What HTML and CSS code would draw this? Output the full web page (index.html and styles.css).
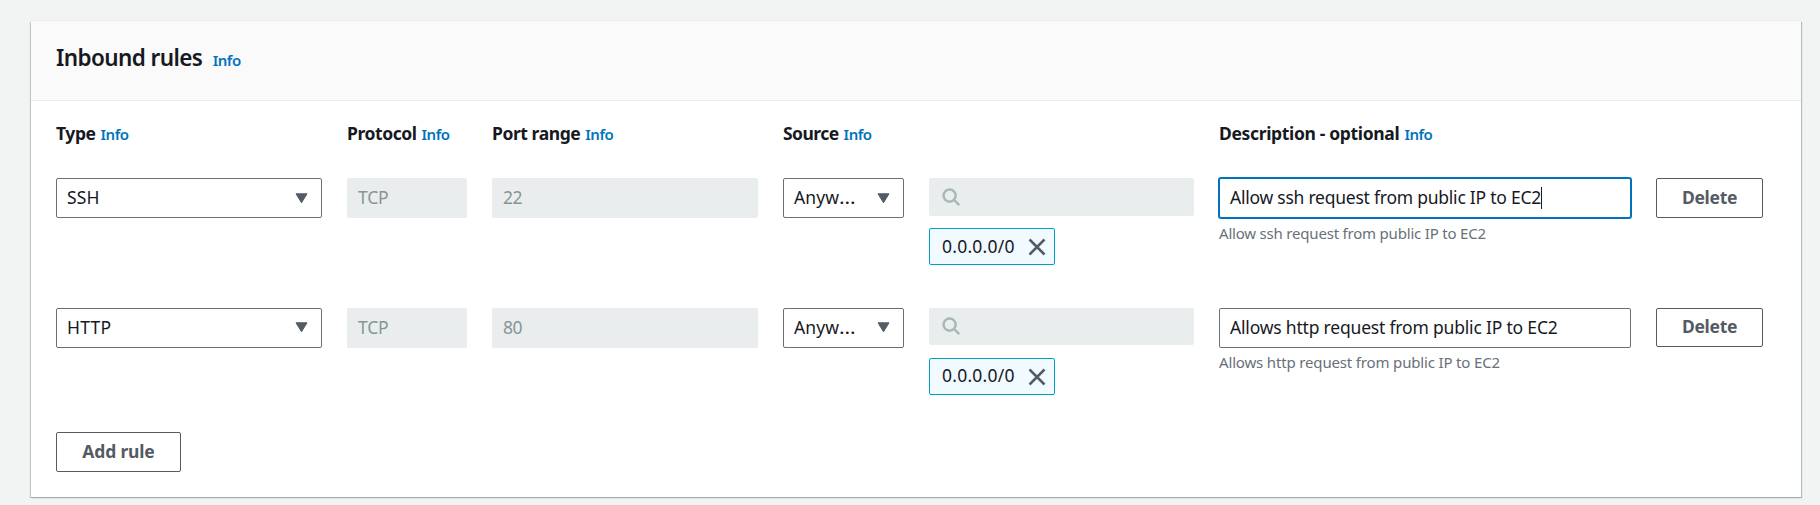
FILE: index.html
```
<!DOCTYPE html>
<html lang="en">
<head>
<meta charset="utf-8">
<title>Inbound rules</title>
<link rel="stylesheet" href="styles.css">
</head>
<body>
<section class="panel">
  <header class="panel-header">
    <h2 class="title">Inbound rules</h2>
    <a class="info">Info</a>
  </header>
  <div class="panel-body">
    <div class="grid labels">
      <div class="label"><span class="t-type">Type</span><a class="info">Info</a></div>
      <div class="label"><span>Protocol</span><a class="info">Info</a></div>
      <div class="label"><span>Port range</span><a class="info">Info</a></div>
      <div class="label"><span class="t-source">Source</span><a class="info">Info</a></div>
      <div></div>
      <div class="label"><span class="t-desc">Description - optional</span><a class="info">Info</a></div>
    </div>

    <div class="grid rule">
      <div class="field select"><span class="t-caps">SSH</span><svg class="caret" viewBox="0 0 13 11"><path d="M1 .8h11L6.5 9.8z"/></svg></div>
      <div class="field disabled"><span class="t-tcp">TCP</span></div>
      <div class="field disabled"><span class="t-num">22</span></div>
      <div class="field select"><span class="t-any">Anyw<span class="dots">…</span></span><svg class="caret" viewBox="0 0 13 11"><path d="M1 .8h11L6.5 9.8z"/></svg></div>
      <div>
        <div class="field disabled search"><svg class="lens" viewBox="0 0 20 20"><circle cx="8" cy="8" r="6.4"/><path d="M12.6 12.6l5.6 5.4"/></svg></div>
        <div class="token"><span class="t-ip">0.0.0.0/0</span><svg class="close" viewBox="0 0 18 18"><path d="M1.5 1.5l15 15M16.5 1.5l-15 15"/></svg></div>
      </div>
      <div>
        <div class="field focused"><span class="t-ssh">Allow ssh request from public IP to EC2</span><i class="cursor"></i></div>
        <div class="hint hint-ssh">Allow ssh request from public IP to EC2</div>
      </div>
      <button class="button delete">Delete</button>
    </div>

    <div class="grid rule second">
      <div class="field select"><span class="t-caps">HTTP</span><svg class="caret" viewBox="0 0 13 11"><path d="M1 .8h11L6.5 9.8z"/></svg></div>
      <div class="field disabled"><span class="t-tcp">TCP</span></div>
      <div class="field disabled"><span class="t-num">80</span></div>
      <div class="field select"><span class="t-any">Anyw<span class="dots">…</span></span><svg class="caret" viewBox="0 0 13 11"><path d="M1 .8h11L6.5 9.8z"/></svg></div>
      <div>
        <div class="field disabled search"><svg class="lens" viewBox="0 0 20 20"><circle cx="8" cy="8" r="6.4"/><path d="M12.6 12.6l5.6 5.4"/></svg></div>
        <div class="token"><span class="t-ip">0.0.0.0/0</span><svg class="close" viewBox="0 0 18 18"><path d="M1.5 1.5l15 15M16.5 1.5l-15 15"/></svg></div>
      </div>
      <div>
        <div class="field"><span class="t-http">Allows http request from public IP to EC2</span></div>
        <div class="hint hint-http">Allows http request from public IP to EC2</div>
      </div>
      <button class="button delete">Delete</button>
    </div>

    <button class="button add">Add rule</button>
  </div>
</section>
</body>
</html>
```
FILE: styles.css
```
* { box-sizing: border-box; }

body {
  margin: 0;
  height: 505px;
  padding: 21px 19px 0 31px;
  overflow: hidden;
  background: #f2f3f3;
  color: #16191f;
  font: 17.5px/24px "Noto Sans", "Open Sans", sans-serif;
  white-space: nowrap;
}

.panel {
  height: 476px;
  background: #fff;
  box-shadow: 0 -1px 0 #eaeded, 0 1px 0 #a3aeb0, 1px 1px 1px rgba(0, 28, 36, .25), -1px 1px 1px rgba(0, 28, 36, .2);
}

.panel-header {
  display: flex;
  align-items: baseline;
  gap: 10.5px;
  height: 80px;
  padding: 21px 25px 0;
  background: #fafafa;
  border-bottom: 1px solid #eaeded;
}

.title {
  margin: 0;
  font-size: 22.5px;
  line-height: 32px;
  font-weight: 650;
  letter-spacing: -.6px;
}

.info {
  color: #0073bb;
  font-size: 15px;
  font-weight: 650;
  letter-spacing: -.5px;
}

.panel-body { padding: 20px 25px 0; }

.grid {
  display: grid;
  grid-template-columns: 266px 120px 266px 121px 265px 412px 107px;
  column-gap: 25px;
  align-items: start;
}

.labels { height: 57px; }

.label {
  display: flex;
  align-items: baseline;
  gap: 5px;
  font-weight: 700;
  letter-spacing: -.43px;
}

.rule { height: 130px; }
.second { height: 124px; }

.field {
  display: flex;
  align-items: center;
  height: 40px;
  padding: 0 10px;
  background: #fff;
  border: 1px solid #687078;
  border-radius: 2px;
}

.field > span, .token > span { padding-bottom: 2px; }
.second .token > span { padding-bottom: 4px; }

.select { justify-content: space-between; padding-right: 13.5px; }

.disabled {
  background: #e9eded;
  border-color: #e9eded;
  color: #879596;
}

.focused {
  border-color: #0073bb;
  box-shadow: 0 0 0 1px #0073bb;
}

.search { height: 38px; padding-left: 12px; }
.second .search { height: 37px; }

.caret { width: 13px; height: 11px; fill: #545b64; stroke: #545b64; stroke-width: 1; stroke-linejoin: round; }
.second .caret { margin-bottom: 2px; }
.lens { width: 19px; height: 19px; fill: none; stroke: #aab7b8; stroke-width: 2.6; }
.close { width: 18px; height: 18px; fill: none; stroke: #545b64; stroke-width: 2.5; }

.token {
  display: flex;
  align-items: center;
  justify-content: space-between;
  width: 126px;
  height: 37px;
  margin-top: 12px;
  padding: 0 8px 0 12px;
  background: #f1faff;
  border: 1px solid #00a1c9;
  border-radius: 2px;
}

.second .token { margin-top: 13px; }

.hint {
  margin-top: 4px;
  color: #687078;
  font-size: 15px;
  line-height: 22px;
}

.second .hint { margin-top: 3px; }

.cursor { width: 1px; height: 22px; background: #16191f; }

.button {
  display: flex;
  align-items: center;
  justify-content: center;
  height: 40px;
  padding: 0 0 2px;
  background: #fff;
  border: 1px solid #545b64;
  border-radius: 2px;
  color: #545b64;
  font: 700 17.5px/24px "Noto Sans", "Open Sans", sans-serif;
}

.delete { width: 107px; letter-spacing: -.3px; }
.second .delete { height: 39px; padding-bottom: 3px; }
.add { width: 125px; letter-spacing: -.17px; }

.t-source { letter-spacing: -.55px; }
.t-desc { letter-spacing: -.34px; }
.t-caps { letter-spacing: .2px; }
.t-tcp { letter-spacing: -.22px; }
.t-num { letter-spacing: -.5px; }
.t-any { letter-spacing: .1px; }
.dots { letter-spacing: 0; display: inline-block; transform: scaleX(1.2); transform-origin: left; }
.t-ip { letter-spacing: .24px; }
.t-ssh { letter-spacing: -.24px; }
.t-http { letter-spacing: -.19px; }
.hint-ssh { letter-spacing: -.2px; }
.hint-http { letter-spacing: -.16px; }
```
